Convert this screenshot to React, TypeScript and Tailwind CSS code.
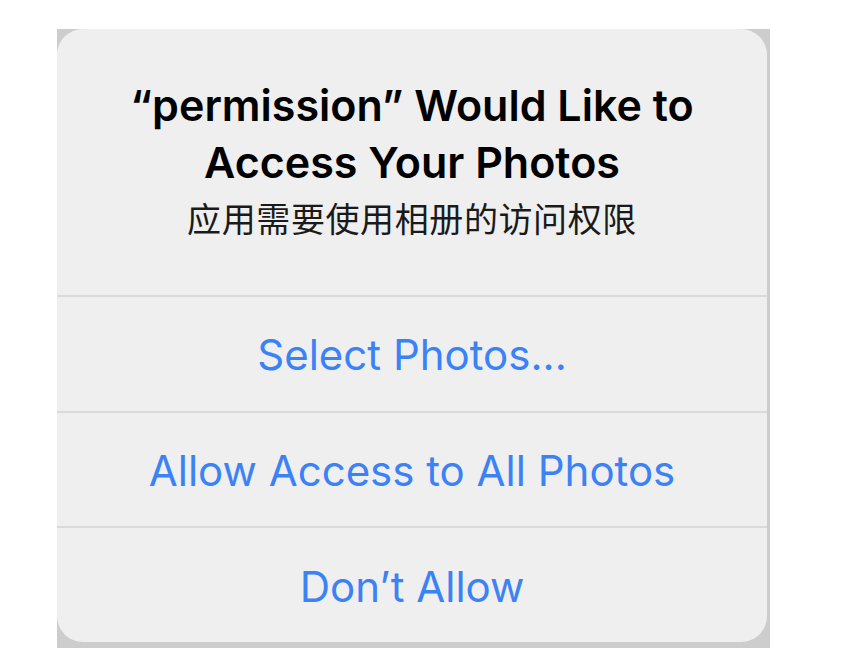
export default function App() {
  const actions = ["Select Photos...", "Allow Access to All Photos", "Don\u2019t Allow"];

  return (
    <div className="min-h-screen w-[866px] bg-white pt-[29px] pl-[57px] [font-family:Inter,'Noto_Sans_CJK_SC',sans-serif]">
      {/* gray backdrop peeking out at the corners */}
      <div className="flex h-[619px] w-[713px] bg-[#cdcdcd] pr-[3px] pb-[6px]">
        <div className="flex flex-1 flex-col rounded-[26px] bg-[#efefef]">
          <div className="flex h-[266px] flex-col items-center pt-[48px] text-center">
            <h1 className="text-[43px] leading-[57px] font-semibold text-black">
              “permission” Would Like to
              <br />
              Access Your Photos
            </h1>
            <p className="mt-[5px] text-[34px] leading-[44px] tracking-[0.6px] text-[#1a1a1a] [font-family:'Noto_Sans_CJK_SC',sans-serif]">
              应用需要使用相册的访问权限
            </p>
          </div>
          {actions.map((label, i) => (
            <button
              key={label}
              className={
                "flex flex-1 items-center justify-center border-t-2 border-[#dadada] pt-[2px] text-[42px] text-[#3b82f6] " +
                (i === actions.length - 1 ? "rounded-b-[26px]" : "")
              }
            >
              {label}
            </button>
          ))}
        </div>
      </div>
    </div>
  );
}
